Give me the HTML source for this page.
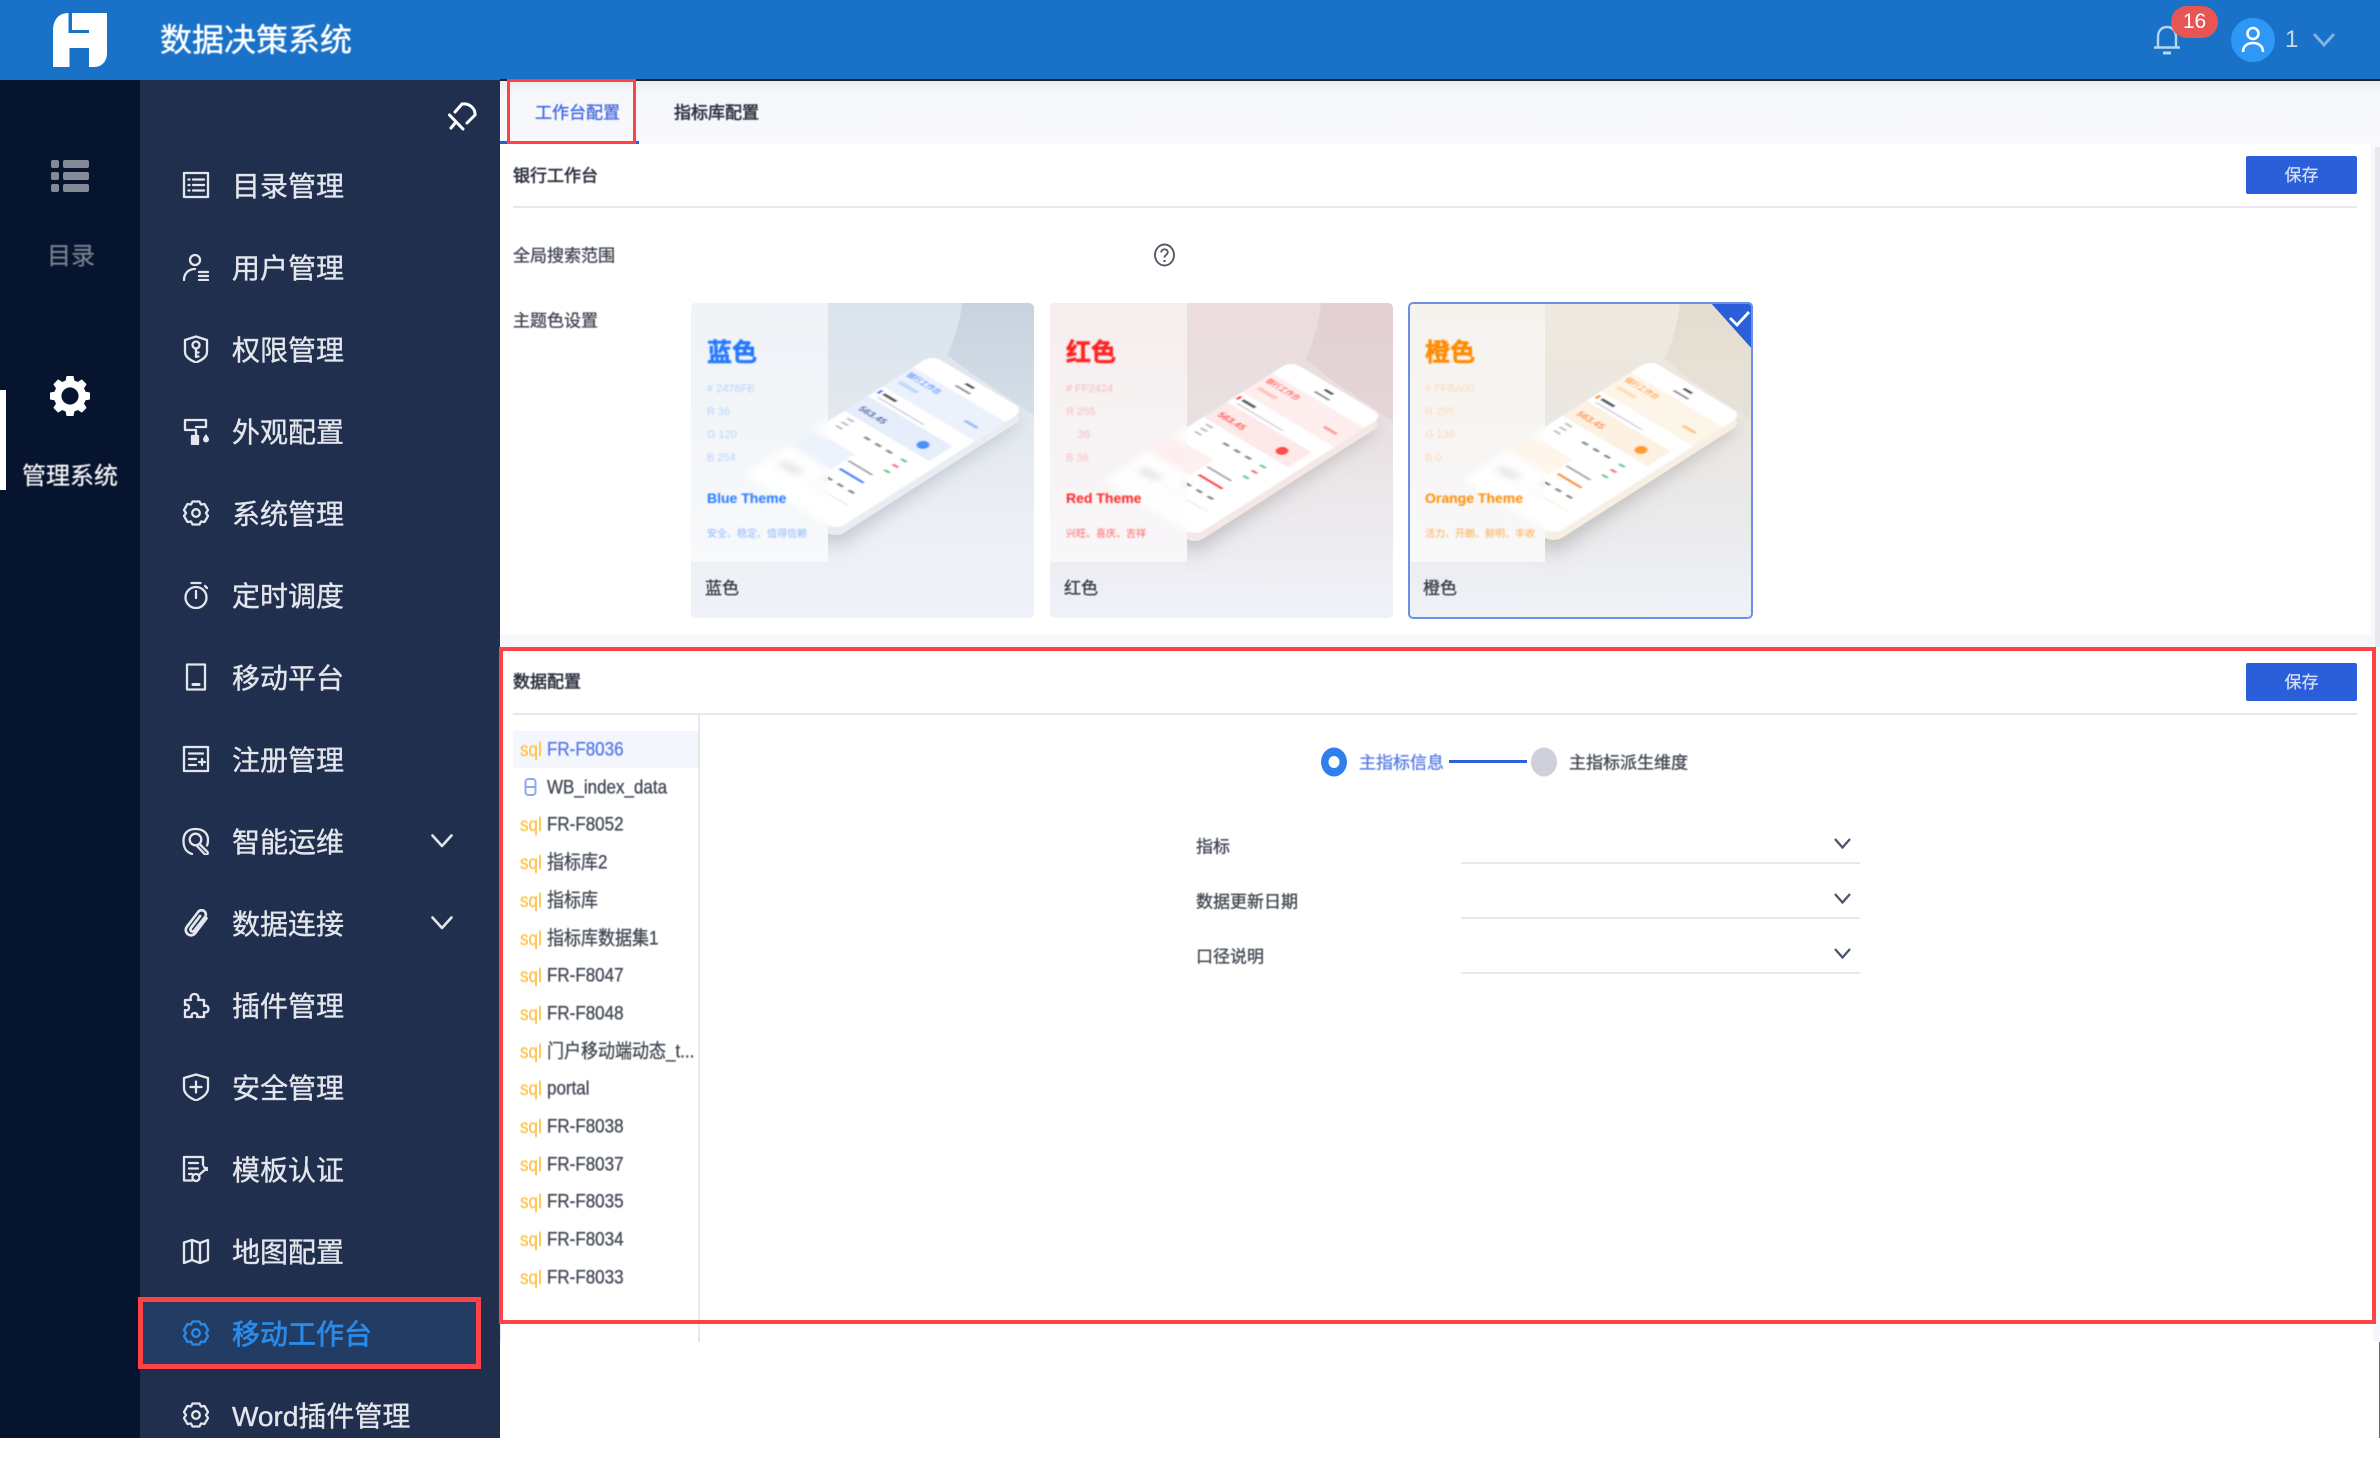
<!DOCTYPE html>
<html lang="zh"><head><meta charset="utf-8"><title>数据决策系统</title>
<style>
*{box-sizing:border-box;margin:0;padding:0}
html,body{width:2380px;height:1438px;overflow:hidden;background:#fff;font-family:"Liberation Sans","Noto Sans CJK SC",sans-serif}
.a{position:absolute}
.t{position:absolute;white-space:nowrap;line-height:1;transform:translateY(calc(-50% + 1px));font-size:17px;color:#444a55;filter:blur(.45px);-webkit-text-stroke:.35px currentColor}
.b{color:#2e3440;-webkit-text-stroke:.6px currentColor}
.it{position:absolute;left:140px;width:360px;height:82px}
.it svg{position:absolute;top:27px;left:42px;width:28px;height:28px;fill:none;stroke:#e3e6ec;stroke-width:2.3;stroke-linejoin:round;stroke-linecap:round}
.it span{position:absolute;left:92px;top:0;line-height:85px;font-size:28px;color:#e3e6ec;white-space:nowrap;filter:blur(.35px);-webkit-text-stroke:.35px currentColor}
.ch{position:absolute;left:291px;top:34px;width:22px;height:14px;fill:none;stroke:#e3e6ec;stroke-width:3}
.btn{position:absolute;left:2246px;width:111px;height:38px;background:#2b5fd9;border-radius:2px;color:#d6e0f7;font-size:17px;line-height:39px;text-align:center;filter:blur(.3px);-webkit-text-stroke:.2px currentColor}
.line{position:absolute;background:#e7e8ee}
.rb{position:absolute;border:4px solid #ff4246;pointer-events:none}
.card{position:absolute;top:303px;width:343px;height:315px;border-radius:5px;overflow:hidden;background:#eff2f8}
.card svg{position:absolute;left:0;top:0;width:343px;height:315px}
.cap{position:absolute;left:14px;top:276px;font-size:17px;line-height:20px;color:#3b414c;filter:blur(.45px);-webkit-text-stroke:.35px currentColor}
.li{position:absolute;left:547px;font-size:17px;line-height:1;color:#434955;transform:translateY(calc(-50% + .5px)) scaleY(1.12);transform-origin:left center;white-space:nowrap;filter:blur(.4px);-webkit-text-stroke:.3px currentColor}
.sq{position:absolute;left:520px;font-size:17px;line-height:1;color:#ffc550;transform:translateY(-46%) scaleY(1.15);filter:blur(.35px);-webkit-text-stroke:.35px currentColor}
.dd{position:absolute;left:1834px;width:17px;height:11px;fill:none;stroke:#4a5568;stroke-width:2.300}
svg text{font-family:"Liberation Sans","Noto Sans CJK SC",sans-serif}
</style></head><body>

<svg width="0" height="0" style="position:absolute">
<defs>
<filter id="f05" x="-10%" y="-10%" width="120%" height="120%"><feGaussianBlur stdDeviation=".7"/></filter>
<filter id="f1" x="-10%" y="-30%" width="120%" height="160%"><feGaussianBlur stdDeviation=".8"/></filter>
<filter id="f3" x="-20%" y="-20%" width="140%" height="140%"><feGaussianBlur stdDeviation="3.5"/></filter>
<filter id="f8" x="-30%" y="-30%" width="160%" height="160%"><feGaussianBlur stdDeviation="9"/></filter>
<clipPath id="cr"><rect x="137" y="0" width="208" height="317"/></clipPath>
<clipPath id="cl"><rect x="0" y="0" width="137" height="259"/></clipPath>
<g id="ph">
  <rect x="0" y="0" width="100" height="200" rx="9" fill="#fff"/>
  <rect x="0" y="20" width="100" height="32" fill="var(--t)" opacity=".75"/>
  <rect x="40" y="13" width="16" height="2" fill="#555" opacity=".7"/>
  <rect x="44" y="6" width="9" height="2.500" fill="#111" opacity=".8"/>
  <rect x="5" y="38" width="20" height="4" fill="var(--a)" opacity=".2"/>
  <rect x="76" y="38" width="14" height="3" fill="var(--a)" opacity=".4"/>
  <rect x="2" y="56" width="2.500" height="5" fill="var(--a)"/>
  <rect x="7" y="57" width="14" height="3" fill="#222" opacity=".75"/>
  <rect x="7" y="63.500" width="50" height="1.500" fill="#88a" opacity=".4"/>
  <rect x="0" y="68" width="92" height="25" fill="var(--t)"/>
  <circle cx="74" cy="82" r="5" fill="var(--a)" opacity=".8"/>
  <rect x="8" y="97" width="7" height="2" fill="#777" opacity=".5"/><rect x="8" y="103" width="7" height="2" fill="#777" opacity=".5"/><rect x="8" y="109" width="7" height="2" fill="#777" opacity=".5"/>
  <rect x="34" y="104" width="6" height="2.500" fill="#444" opacity=".65"/><rect x="46" y="104" width="6" height="2.500" fill="#444" opacity=".65"/><rect x="58" y="104" width="6" height="2.500" fill="#444" opacity=".65"/>
  <rect x="74" y="104" width="6" height="2.500" fill="#3bbf7b" opacity=".8"/><rect x="74" y="113" width="6" height="2.500" fill="#e8555f" opacity=".8"/><rect x="74" y="122" width="6" height="2.500" fill="#3bbf7b" opacity=".8"/>
  <rect x="0" y="125" width="44" height="26" fill="var(--t)" opacity=".7"/>
  <rect x="46" y="133" width="26" height="2" fill="#555" opacity=".55"/>
  <rect x="48" y="144" width="26" height="2.500" fill="var(--a)" opacity=".9"/>
  <rect x="48" y="158" width="6" height="2.500" fill="#444" opacity=".65"/><rect x="60" y="158" width="6" height="2.500" fill="#444" opacity=".65"/><rect x="72" y="158" width="6" height="2.500" fill="#444" opacity=".65"/>
  <rect x="10" y="166" width="20" height="8" fill="#bbb" opacity=".4"/>
  <rect x="36" y="172" width="50" height="1.500" fill="var(--t)"/>
</g>
</defs>
</svg>

<!-- rail and sidebar -->
<div class="a" style="left:0;top:80px;width:140px;height:1358px;background:#07142f"></div>
<div class="a" style="left:140px;top:80px;width:360px;height:1358px;background:#202f4d"></div>
<div class="a" style="left:0;top:390px;width:6px;height:100px;background:#fff"></div>

<svg class="a" style="left:48px;top:158px" width="44" height="36" fill="#858a97"><rect x="3" y="2" width="8" height="8" rx="2"/><rect x="15" y="2" width="26" height="8" rx="2"/><rect x="3" y="14" width="8" height="8" rx="2"/><rect x="15" y="14" width="26" height="8" rx="2"/><rect x="3" y="26" width="8" height="8" rx="2"/><rect x="15" y="26" width="26" height="8" rx="2"/></svg>
<div class="t" style="left:47px;top:256px;font-size:24px;color:#7b8290;-webkit-text-stroke:.2px #7b8290">目录</div>
<svg class="a" style="left:50px;top:376px" width="40" height="40" viewBox="0 0 28 28"><polygon points="27.830,11.810 27.830,16.190 24.630,16.850 23.530,19.500 25.330,22.230 22.230,25.330 19.500,23.530 16.850,24.630 16.190,27.830 11.810,27.830 11.150,24.630 8.500,23.530 5.770,25.330 2.670,22.230 4.470,19.500 3.370,16.850 0.170,16.190 0.170,11.810 3.370,11.150 4.470,8.500 2.670,5.770 5.770,2.670 8.500,4.470 11.150,3.370 11.810,0.170 16.190,0.170 16.850,3.370 19.500,4.470 22.230,2.670 25.330,5.770 23.530,8.500 24.630,11.150" fill="#fff" stroke="#fff" stroke-width=".5" stroke-linejoin="round"/><circle cx="14" cy="14" r="6" fill="#07142f"/></svg>
<div class="t" style="left:22px;top:476px;font-size:24px;color:#f4f5f7;-webkit-text-stroke:.25px #f4f5f7">管理系统</div>

<svg class="a" style="left:448px;top:102px" width="30" height="29" viewBox="0 0 30 29" fill="none" stroke="#fff" stroke-width="3" stroke-linejoin="round" stroke-linecap="round"><path d="M14 2C21 1 27.500 6 27 13M14 2L7 10M27 13L19 21M1.500 13L15 27M8 20L3 26"/></svg>

<div class="it" style="top:144px"><svg viewBox="0 0 28 28"><rect x="2" y="2" width="24" height="24"/><path d="M6.500 8.500h1M11 8.500h11M6.500 14h1M11 14h11M6.500 19.500h1M11 19.500h11"/></svg><span>目录管理</span></div>
<div class="it" style="top:226px"><svg viewBox="0 0 28 28"><circle cx="13" cy="7" r="5"/><path d="M2 27c0-6 4-11 11-11M17 19h9M17 23h9M17 27h9"/></svg><span>用户管理</span></div>
<div class="it" style="top:308px"><svg viewBox="0 0 28 28"><path d="M14 1.500L25 5v12c0 5-5 8-11 10.500C8 25 3 22 3 17V5z"/><circle cx="14" cy="10" r="3.500"/><path d="M14 13.500V22M14 17.500h2.500M14 21.500h2.500"/></svg><span>权限管理</span></div>
<div class="it" style="top:390px"><svg viewBox="0 0 28 28"><path d="M3 13V3h21v7H14M3 13h11v5"/><rect x="10" y="19" width="6" height="8" fill="#e3e6ec"/><path d="M24 17c-2 3-3 4-3 5.500a3 3 0 0 0 6 0c0-1.500-1-2.500-3-5.500z" fill="#e3e6ec" stroke="none"/></svg><span>外观配置</span></div>
<div class="it" style="top:472px"><svg viewBox="0 0 28 28"><path d="M10.500 2.500h7l1.500 3 3.500-.5 3.500 6-2 3 2 3-3.500 6-3.500-.5-1.500 3h-7l-1.500-3-3.500.5-3.500-6 2-3-2-3 3.500-6 3.500.5z"/><circle cx="14" cy="14" r="3.800"/></svg><span>系统管理</span></div>
<div class="it" style="top:554px"><svg viewBox="0 0 28 28"><circle cx="14" cy="16.500" r="10.500"/><path d="M9.500 2h9M14 10v7M23 5l2 2"/></svg><span>定时调度</span></div>
<div class="it" style="top:636px"><svg viewBox="0 0 28 28"><rect x="5" y="1.500" width="18" height="25"/><path d="M11 21.500h6" stroke-width="3"/></svg><span>移动平台</span></div>
<div class="it" style="top:718px"><svg viewBox="0 0 28 28"><rect x="2" y="2" width="24" height="24"/><path d="M7 8.500h14M7 14h7M7 20h7M17 17h6M20 14v6"/></svg><span>注册管理</span></div>
<div class="it" style="top:800px"><svg viewBox="0 0 28 28"><path d="M10 27C4 25 1.500 21 1.500 14 1.500 6 6 2 13.500 2 21 2 26 6 26 13c0 2-.3 4-1 5.500"/><circle cx="13.500" cy="12.500" r="5.800"/><path d="M17.500 17l8 8a1.800 1.800 0 0 1-3 2l-7.500-8"/></svg><span>智能运维</span><svg class="ch" style="left:291px;top:34px;width:22px;height:14px" viewBox="0 0 22 14"><path d="M1.500 1.500L11 12l9.500-10.500" stroke-width="2.600"/></svg></div>
<div class="it" style="top:882px"><svg viewBox="0 0 24 24"><path d="M21 8L11.500 20.500a4.500 4.500 0 0 1-7.500-5L13.500 3a3.500 3.500 0 0 1 6.500 3.500L10.500 18.500a1.800 1.800 0 0 1-3-2L15.500 6"/></svg><span>数据连接</span><svg class="ch" style="left:291px;top:34px;width:22px;height:14px" viewBox="0 0 22 14"><path d="M1.500 1.500L11 12l9.500-10.500" stroke-width="2.600"/></svg></div>
<div class="it" style="top:964px"><svg viewBox="0 0 28 28"><path d="M3 9h6c-1-2-.5-6 3.500-6s4.500 4 3.500 6h6v6c2-1 4.500 0 4.500 3s-2.500 4-4.500 3v5h-7c1-2 0-4-2.500-4s-3.500 2-2.500 4H3v-7c2 1 4 0 4-2.500S5 13 3 14z"/></svg><span>插件管理</span></div>
<div class="it" style="top:1046px"><svg viewBox="0 0 28 28"><path d="M14 1.500L26 5v10c0 6-6 10-12 12.500C8 25 2 21 2 15V5z"/><path d="M14 8.500v11M8.500 14h11"/></svg><span>安全管理</span></div>
<div class="it" style="top:1128px"><svg viewBox="0 0 28 28"><path d="M10 25.500H2V2h19v8M7 8h9M7 13.500h9M7 19h3"/><circle cx="14" cy="22.500" r="3.500"/><path d="M17 20l8-7M22 12l3 3"/></svg><span>模板认证</span></div>
<div class="it" style="top:1210px"><svg viewBox="0 0 28 28"><path d="M2 5.500L10 3l8 3 8-3v20l-8 3-8-3-8 3zM10 3v20M18 6v20"/></svg><span>地图配置</span></div>

<div class="a" style="left:140px;top:1297px;width:341px;height:72px;background:#223c63"></div>
<div class="it" style="top:1292px"><svg viewBox="0 0 28 28" style="stroke:#2a8be8"><path d="M10.500 2.500h7l1.500 3 3.500-.5 3.500 6-2 3 2 3-3.500 6-3.500-.5-1.500 3h-7l-1.500-3-3.500.5-3.500-6 2-3-2-3 3.500-6 3.500.5z"/><circle cx="14" cy="14" r="3.800"/></svg><span style="color:#2a8be8;-webkit-text-stroke:.7px #2a8be8">移动工作台</span></div>
<div class="it" style="top:1374px"><svg viewBox="0 0 28 28"><path d="M10.500 2.500h7l1.500 3 3.500-.5 3.500 6-2 3 2 3-3.500 6-3.500-.5-1.500 3h-7l-1.500-3-3.500.5-3.500-6 2-3-2-3 3.500-6 3.500.5z"/><circle cx="14" cy="14" r="3.800"/></svg><span>Word插件管理</span></div>
<div class="rb" style="left:138px;top:1297px;width:343px;height:72px;border-width:5px"></div>

<!-- header -->
<div class="a" style="left:0;top:0;width:2380px;height:80px;background:#1a72c8"></div>
<div class="a" style="left:500px;top:79px;width:1880px;height:2px;background:#1b2430"></div>
<svg class="a" style="left:50px;top:10px" width="60" height="60" viewBox="50 10 60 60"><path d="M68 13H107V53C107 61 102 67 94 67H53V30C53 20 59 13 68 13Z" fill="#fff"/><path d="M68.500 13h3.500v17H89v18H69.500V33H68.500z" fill="#1a72c8"/><rect x="69" y="33" width="20" height="15" fill="#fff"/><rect x="69.500" y="48" width="19.500" height="19" fill="#1a72c8"/></svg>
<div class="t" style="left:160px;top:39px;font-size:32px;color:#fff;-webkit-text-stroke:.4px #fff">数据决策系统</div>

<svg class="a" style="left:2152px;top:24px" width="30" height="32" viewBox="0 0 30 32" fill="none" stroke="#b0d8f2" stroke-width="2.400"><path d="M6 23V13C6 7 9.500 3 15 3s9 4 9 10v10M2 23.500h26"/><path d="M11 29h8" stroke-width="3"/></svg>
<div class="a" style="left:2171px;top:6px;width:47px;height:32px;border-radius:16px;background:#e85555;color:#fff;font-size:21px;line-height:32px;text-align:center">16</div>
<div class="a" style="left:2231px;top:18px;width:44px;height:44px;border-radius:50%;background:#2f97f5"></div>
<svg class="a" style="left:2240px;top:26px" width="26" height="28" viewBox="0 0 26 28" fill="none" stroke="#fff" stroke-width="2.600"><circle cx="13" cy="7.500" r="5.500"/><path d="M3 26c0-6 4.500-9 10-9s10 3 10 9"/></svg>
<div class="a" style="left:2285px;top:28px;font-size:24px;line-height:24px;color:#c5d8ee">1</div>
<svg class="a" style="left:2312px;top:32px" width="24" height="16" viewBox="0 0 24 16" fill="none" stroke="#86b4de" stroke-width="2.800"><path d="M2 2l10 11L22 2"/></svg>

<!-- main -->
<div class="a" style="left:500px;top:81px;width:1880px;height:63px;background:linear-gradient(#eceef2,#f6f7fb 14px,#f8f9fd)"></div>
<div class="a" style="left:500px;top:144px;width:1880px;height:503px;background:#f7f8fc"></div>
<div class="a" style="left:500px;top:144px;width:1871px;height:490px;background:#fff"></div>
<div class="a" style="left:2375px;top:147px;width:5px;height:500px;background:#e8e9ef"></div>
<div class="a" style="left:500px;top:141px;width:139px;height:3px;background:#2b5fd9"></div>
<div class="t" style="left:535px;top:112px;color:#4369e0">工作台配置</div>
<div class="t b" style="left:674px;top:112px">指标库配置</div>
<div class="rb" style="left:507px;top:79px;width:129px;height:65px;border-width:3.500px"></div>

<div class="t b" style="left:513px;top:175px">银行工作台</div>
<div class="btn" style="top:156px">保存</div>
<div class="line" style="left:513px;top:206px;width:1844px;height:2px"></div>
<div class="t" style="left:513px;top:255px">全局搜索范围</div>
<svg class="a" style="left:1153px;top:243px" width="23" height="24" viewBox="0 0 23 24" fill="none" stroke="#555b66" stroke-width="1.900"><ellipse cx="11.500" cy="12" rx="9.500" ry="10.500"/><path d="M8.200 9.500c0-2 1.400-3.200 3.300-3.200s3.300 1.200 3.300 3c0 2.500-3.300 2.500-3.300 5.200"/><path d="M11.500 17v2" stroke-width="2.200"/></svg>
<div class="t" style="left:513px;top:320px">主题色设置</div>

<!-- card blue -->
<div class="card" style="left:691px">
<svg viewBox="0 0 343 315" style="--a:#2478fe;--t:#e6eefb">
<defs><linearGradient id="g1" x1="0" y1="0" x2="0" y2="1"><stop offset="0" stop-color="#dbe4ec"/><stop offset=".35" stop-color="#e2e8ee"/><stop offset=".7" stop-color="#eceff4"/><stop offset="1" stop-color="#eff2f8"/></linearGradient>
<linearGradient id="a1" x1="0" y1="0" x2="0" y2="1"><stop offset="0" stop-color="#c6d2de"/><stop offset="1" stop-color="#d6dfe8"/></linearGradient>
<linearGradient id="p1" x1="0" y1="0" x2="0" y2="1"><stop offset="0" stop-color="#eff3f7"/><stop offset="1" stop-color="#f7f9fb"/></linearGradient></defs>
<rect width="343" height="315" fill="url(#g1)"/>
<path d="M271 0Q268 28 256 52L280 70 343 112V0Z" fill="url(#a1)"/>
<g filter="url(#f8)"><path d="M331 118L145 245 105 222 300 108Z" fill="#8d97a5" opacity=".42"/></g>
<g clip-path="url(#cr)">
<g transform="matrix(.92 .55 -.94 .6 241 60)"><rect width="100" height="200" rx="9" fill="#e9edf1"/></g>
<g transform="matrix(.92 .55 -.94 .6 241 52)" filter="url(#f05)"><use href="#ph"/>
<text x="3" y="31" font-size="7" font-weight="700" fill="#2478fe" opacity=".75">银行工作台</text>
<text x="6" y="85" font-size="9" font-weight="700" fill="#2c4f9e">563.45</text></g>
</g>
<rect width="137" height="259" fill="url(#p1)"/>
<g clip-path="url(#cl)">
<g transform="matrix(.92 .55 -.94 .6 241 52)" filter="url(#f3)"><use href="#ph" opacity=".95"/></g></g>
<g filter="url(#f05)" fill="#2478fe">
<text x="16" y="58" font-size="25" font-weight="700" stroke="#2478fe" stroke-width=".5">蓝色</text>
<g font-size="11" opacity=".28"><text x="16" y="89"># 2478FE</text><text x="16" y="112">R 36</text><text x="16" y="135">G 120</text><text x="16" y="158">B 254</text></g>
<text x="16" y="200" font-size="14" font-weight="700">Blue Theme</text>
<text x="16" y="234" font-size="10" opacity=".5">安全、稳定、值得信赖</text></g>
</svg><div class="cap">蓝色</div></div>

<!-- card red -->
<div class="card" style="left:1050px">
<svg viewBox="0 0 343 315" style="--a:#ff2424;--t:#fde9e8">
<defs><linearGradient id="g2" x1="0" y1="0" x2="0" y2="1"><stop offset="0" stop-color="#ecdcdc"/><stop offset=".35" stop-color="#e9e0e1"/><stop offset=".7" stop-color="#eceaee"/><stop offset="1" stop-color="#eff2f8"/></linearGradient>
<linearGradient id="a2" x1="0" y1="0" x2="0" y2="1"><stop offset="0" stop-color="#e2cfd1"/><stop offset="1" stop-color="#e6d6d8"/></linearGradient>
<linearGradient id="p2" x1="0" y1="0" x2="0" y2="1"><stop offset="0" stop-color="#f6eeee"/><stop offset="1" stop-color="#f8f7f9"/></linearGradient></defs>
<rect width="343" height="315" fill="url(#g2)"/>
<path d="M271 0Q268 28 256 56L280 76 343 118V0Z" fill="url(#a2)"/>
<g filter="url(#f8)"><path d="M331 124L145 251 105 228 300 114Z" fill="#8f8a90" opacity=".42"/></g>
<g clip-path="url(#cr)">
<g transform="matrix(.92 .55 -.94 .6 241 66)"><rect width="100" height="200" rx="9" fill="#f3e8e5"/></g>
<g transform="matrix(.92 .55 -.94 .6 241 58)" filter="url(#f05)"><use href="#ph"/>
<text x="3" y="31" font-size="7" font-weight="700" fill="#ff2424" opacity=".75">银行工作台</text>
<text x="6" y="85" font-size="9" font-weight="700" fill="#ff2424">563.45</text></g>
</g>
<rect width="137" height="259" fill="url(#p2)"/>
<g clip-path="url(#cl)"><g transform="matrix(.92 .55 -.94 .6 241 58)" filter="url(#f3)"><use href="#ph" opacity=".95"/></g></g>
<g filter="url(#f05)" fill="#ff2424">
<text x="16" y="58" font-size="25" font-weight="700" stroke="#ff2424" stroke-width=".5">红色</text>
<g font-size="11" opacity=".25"><text x="16" y="89"># FF2424</text><text x="16" y="112">R 255</text><text x="28" y="135">36</text><text x="16" y="158">B 36</text></g>
<text x="16" y="200" font-size="14" font-weight="700">Red Theme</text>
<text x="16" y="234" font-size="10" opacity=".7">兴旺、喜庆、吉祥</text></g>
</svg><div class="cap">红色</div></div>

<!-- card orange -->
<div class="card" style="left:1408px;top:302px;width:345px;height:317px">
<svg viewBox="0 0 345 317" style="width:345px;height:317px;--a:#ff8a00;--t:#fdf1e2">
<defs><linearGradient id="g3" x1="0" y1="0" x2="0" y2="1"><stop offset="0" stop-color="#eee9e0"/><stop offset=".35" stop-color="#ebe7e1"/><stop offset=".7" stop-color="#eaeaec"/><stop offset="1" stop-color="#eff2f8"/></linearGradient>
<linearGradient id="a3" x1="0" y1="0" x2="0" y2="1"><stop offset="0" stop-color="#e4ddd0"/><stop offset="1" stop-color="#e7e2d9"/></linearGradient>
<linearGradient id="p3" x1="0" y1="0" x2="0" y2="1"><stop offset="0" stop-color="#f6f3ee"/><stop offset="1" stop-color="#f8f8f9"/></linearGradient></defs>
<rect width="345" height="317" fill="url(#g3)"/>
<path d="M272 1Q269 29 257 57L281 77 345 119V0Z" fill="url(#a3)"/>
<g filter="url(#f8)"><path d="M332 125L146 252 106 229 301 115Z" fill="#8d8b88" opacity=".42"/></g>
<g clip-path="url(#cr)">
<g transform="matrix(.92 .55 -.94 .6 242 66)"><rect width="100" height="200" rx="9" fill="#f7eee4"/></g>
<g transform="matrix(.92 .55 -.94 .6 242 58)" filter="url(#f05)"><use href="#ph"/>
<text x="3" y="31" font-size="7" font-weight="700" fill="#ff8a00" opacity=".75">银行工作台</text>
<text x="6" y="85" font-size="9" font-weight="700" fill="#ff8a00">563.45</text></g>
</g>
<rect width="137" height="260" fill="url(#p3)"/>
<g clip-path="url(#cl)"><g transform="matrix(.92 .55 -.94 .6 242 58)" filter="url(#f3)"><use href="#ph" opacity=".95"/></g></g>
<g filter="url(#f05)" fill="#ff8a00">
<text x="17" y="59" font-size="25" font-weight="700" stroke="#ff8a00" stroke-width=".5">橙色</text>
<g font-size="11" opacity=".25"><text x="17" y="90"># FFBA00</text><text x="17" y="113">R 255</text><text x="17" y="136">G 138</text><text x="17" y="159">B 0</text></g>
<text x="17" y="201" font-size="14" font-weight="700">Orange Theme</text>
<text x="17" y="235" font-size="10" opacity=".7">活力、开朗、鲜明、丰收</text></g>
<path d="M302 0H345V48Z" fill="#2b5fd9"/>
<path d="M322 16l7 7 12-13" fill="none" stroke="#fff" stroke-width="2.800"/>
</svg>
<div class="cap" style="left:15px;top:277px">橙色</div>
<div class="a" style="left:0;top:0;width:345px;height:317px;border:2px solid #6d8fe8;border-radius:5px"></div>
</div>

<!-- data panel -->
<div class="a" style="left:500px;top:647px;width:1876px;height:675px;background:#fff"></div>
<div class="a" style="left:2376px;top:647px;width:4px;height:695px;background:#f6f7fc"></div>
<div class="a" style="left:2373px;top:1322px;width:7px;height:20px;background:#f6f7fc"></div>
<div class="a" style="left:2379px;top:1342px;width:1px;height:96px;background:#666"></div>
<div class="a" style="left:500px;top:1322px;width:1px;height:20px;background:#e6e7ec"></div>
<div class="t b" style="left:513px;top:681px">数据配置</div>
<div class="btn" style="top:663px">保存</div>
<div class="line" style="left:513px;top:713px;width:1844px;height:2px"></div>
<div class="line" style="left:698px;top:714px;width:2px;height:628px"></div>
<div class="a" style="left:513px;top:731px;width:185px;height:37px;background:#f3f6fd"></div>

<div class="sq" style="top:749px">sql</div><div class="li" style="top:749px;color:#5b79e6">FR-F8036</div>
<svg class="a" style="left:523px;top:777px" width="15" height="20" viewBox="0 0 15 20" fill="none" stroke="#8fa9f0" stroke-width="2"><rect x="2.500" y="2" width="10" height="16" rx="3"/><path d="M2.500 10h10"/></svg><div class="li" style="top:787px">WB_index_data</div>
<div class="sq" style="top:824px">sql</div><div class="li" style="top:824px">FR-F8052</div>
<div class="sq" style="top:862px">sql</div><div class="li" style="top:862px">指标库2</div>
<div class="sq" style="top:900px">sql</div><div class="li" style="top:900px">指标库</div>
<div class="sq" style="top:938px">sql</div><div class="li" style="top:938px">指标库数据集1</div>
<div class="sq" style="top:975px">sql</div><div class="li" style="top:975px">FR-F8047</div>
<div class="sq" style="top:1013px">sql</div><div class="li" style="top:1013px">FR-F8048</div>
<div class="sq" style="top:1051px">sql</div><div class="li" style="top:1051px">门户移动端动态_t...</div>
<div class="sq" style="top:1088px">sql</div><div class="li" style="top:1088px">portal</div>
<div class="sq" style="top:1126px">sql</div><div class="li" style="top:1126px">FR-F8038</div>
<div class="sq" style="top:1164px">sql</div><div class="li" style="top:1164px">FR-F8037</div>
<div class="sq" style="top:1201px">sql</div><div class="li" style="top:1201px">FR-F8035</div>
<div class="sq" style="top:1239px">sql</div><div class="li" style="top:1239px">FR-F8034</div>
<div class="sq" style="top:1277px">sql</div><div class="li" style="top:1277px">FR-F8033</div>

<!-- steps -->
<svg class="a" style="left:1318px;top:745px" width="32" height="34" viewBox="0 0 32 34"><ellipse cx="16" cy="17" rx="13" ry="14.500" fill="#2f80ed"/><ellipse cx="16" cy="17" rx="5.500" ry="6" fill="#fff"/></svg>
<div class="t" style="left:1359px;top:762px;color:#5d80e8">主指标信息</div>
<div class="a" style="left:1449px;top:760px;width:78px;height:3px;background:#2f5fd8"></div>
<svg class="a" style="left:1528px;top:745px" width="32" height="34" viewBox="0 0 32 34"><ellipse cx="16" cy="17" rx="13" ry="14.500" fill="#cdd0d8"/></svg>
<div class="t" style="left:1569px;top:762px">主指标派生维度</div>

<div class="t" style="left:1196px;top:846px">指标</div>
<div class="t" style="left:1196px;top:901px">数据更新日期</div>
<div class="t" style="left:1196px;top:956px">口径说明</div>
<div class="line" style="left:1461px;top:862px;width:399px;height:2px"></div>
<div class="line" style="left:1461px;top:917px;width:399px;height:2px"></div>
<div class="line" style="left:1461px;top:972px;width:399px;height:2px"></div>
<svg class="dd" style="top:838px" viewBox="0 0 17 11"><path d="M1 1l7.500 8.500L16 1"/></svg>
<svg class="dd" style="top:893px" viewBox="0 0 17 11"><path d="M1 1l7.500 8.500L16 1"/></svg>
<svg class="dd" style="top:948px" viewBox="0 0 17 11"><path d="M1 1l7.500 8.500L16 1"/></svg>

<div class="rb" style="left:499px;top:647px;width:1877px;height:677px"></div>
</body></html>
